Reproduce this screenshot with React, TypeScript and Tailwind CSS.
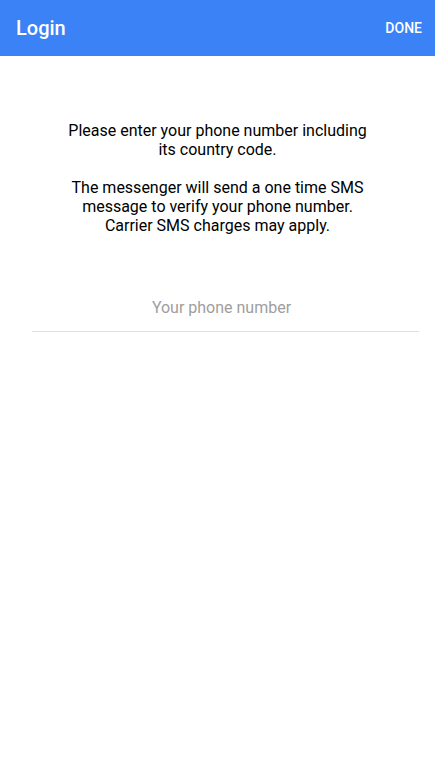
import { useState } from "react";

export default function App() {
  const [phone, setPhone] = useState("");

  return (
    <div
      className="flex flex-col min-h-screen bg-white"
      style={{ fontFamily: "Roboto, 'Liberation Sans', sans-serif" }}
    >
      {/* top bar */}
      <div className="flex flex-row items-center justify-between h-14 bg-[#3b82f6] pl-4 pr-[13px]">
        <h1 className="text-[20px] font-medium text-white">Login</h1>
        <button className="text-[14px] font-medium text-white uppercase">
          Done
        </button>
      </div>

      {/* instructions */}
      <div className="flex flex-col items-center pt-[65px]">
        <p className="w-[310px] text-center text-[16px] leading-[19px] text-black whitespace-pre-line">
          {"Please enter your phone number including its country code.\n\nThe messenger will send a one time SMS message to verify your phone number. Carrier SMS charges may apply."}
        </p>
      </div>

      {/* phone input */}
      <div className="flex pl-8 pr-4 pt-[53px]">
        <input
          type="tel"
          value={phone}
          onChange={(e) => setPhone(e.target.value)}
          placeholder="Your phone number"
          className="w-full h-[44px] pb-[5px] pr-[8px] text-center text-[16px] text-black placeholder:text-[#9e9e9e] border-b border-[#e0e0e0] outline-none bg-transparent"
        />
      </div>
    </div>
  );
}
